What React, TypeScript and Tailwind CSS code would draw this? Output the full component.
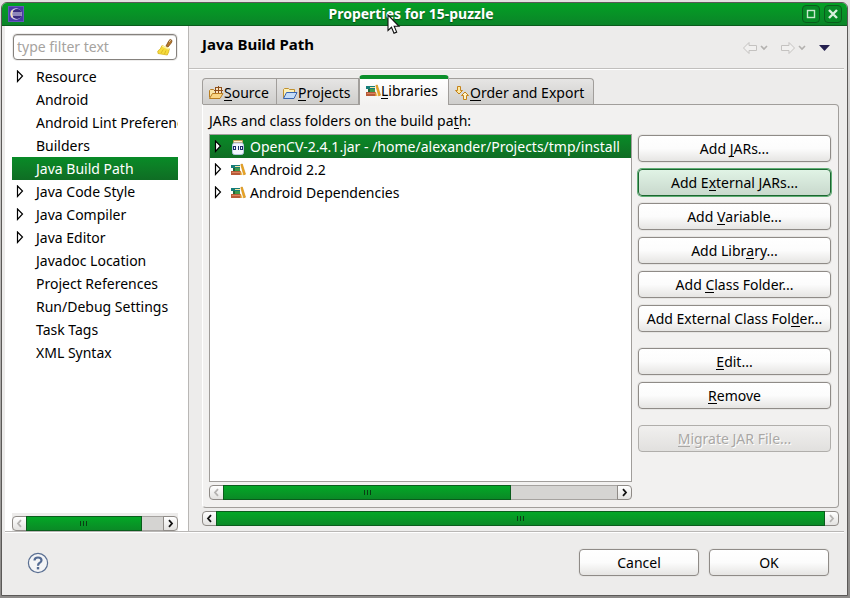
import type { ReactNode } from "react";

const FACE = "border border-[#8f8b87] rounded-[4px] bg-linear-to-b from-white via-[#fcfcfc] to-[#e6e5e3] shadow-[0_0_0_1px_#e6e5e3]";

function Key({ children }: { children: ReactNode }) {
  return <span className="border-b border-current leading-[15px] inline-block h-4">{children}</span>;
}

function Expander({ shown = true }: { shown?: boolean }) {
  return (
    <svg width="8" height="14" viewBox="0 0 8 14" className="shrink-0" aria-hidden="true">
      {shown && <path d="M1.5 1V11.5L6.5 6Z" fill="#fff" stroke="#000" strokeWidth="1.2" />}
    </svg>
  );
}

function EclipseIcon() {
  return (
    <svg width="16" height="16" viewBox="0 0 16 16" className="shrink-0" aria-hidden="true">
      <rect width="16" height="16" fill="#4a3aa6" />
      <rect x=".5" y=".5" width="15" height="15" fill="none" stroke="#6357bb" />
      <circle cx="8" cy="8" r="5.8" fill="#d8d3ea" />
      <circle cx="9" cy="8" r="5" fill="#392a7e" />
      <path d="M4.4 4.5Q2.6 8 4.4 11.5" fill="none" stroke="#f6ddb4" strokeWidth="1.4" />
      <path d="M4 7H14M4 9H14" stroke="#e6e4f7" strokeWidth="1" />
    </svg>
  );
}

function BroomIcon() {
  return (
    <svg width="16" height="18" viewBox="0 0 16 18" aria-hidden="true">
      <path d="M9 8L12 2.5Q13 .8 14.6 2Q15.4 3 14.4 4.8L11 9Z" fill="#b5772a" stroke="#7c4a14" strokeWidth=".8" />
      <path d="M12.3 3.5L13.5 2.5" stroke="#fff" />
      <path d="M5 7.5L12.3 10.8Q12 14 10.3 17L1 15.5L.8 13Q3.8 11.5 5 7.5Z" fill="#f6dc3c" stroke="#d9b41f" strokeWidth=".8" />
      <path d="M4 15L6.3 11.5M7.5 16L9 12.5" stroke="#cfa91a" strokeWidth=".7" />
      <path d="M5.3 8L12 11" stroke="#fdf3a0" strokeWidth="1.4" />
    </svg>
  );
}

function BooksIcon() {
  return (
    <svg width="16" height="14" viewBox="0 0 16 14" className="shrink-0" aria-hidden="true">
      <path d="M1 2H10V5H1Z" fill="#167d79" />
      <path d="M5 3H10V4H5Z" fill="#f6e4a0" />
      <path d="M3 5H10V8H3Z" fill="#3f9a4c" />
      <path d="M3 5H5V8H3Z" fill="#20663a" />
      <path d="M1 8H11V12H1Z" fill="#b85a38" />
      <path d="M2 9.5H10" stroke="#d98560" />
      <path d="M10.8 1.5L12.3 1L15.5 11.2L13.6 11.8Z" fill="#efab22" stroke="#c97f0a" strokeWidth=".6" />
      <path d="M10.5 7L12.6 12H10.5Z" fill="#f3bd45" />
    </svg>
  );
}

function JarIcon() {
  return (
    <svg width="16" height="16" viewBox="0 0 16 16" className="shrink-0" aria-hidden="true">
      <path d="M3.5 1.5H12.5V3.5H3.5Z" fill="#fff4cf" stroke="#c29b52" />
      <path d="M3.5 4H12.5L13.5 6V13.5Q13.5 15.5 11.5 15.5H4.5Q2.5 15.5 2.5 13.5V6Z" fill="#f2f6fd" stroke="#b5c4e2" />
      <g fill="none" stroke="#1d2d6b" strokeWidth="1">
        <rect x="3.5" y="7.5" width="2" height="3" />
        <path d="M8.5 7V11" />
        <rect x="10.5" y="7.5" width="2" height="3" />
      </g>
    </svg>
  );
}

function SourceIcon() {
  return (
    <svg width="16" height="14" viewBox="0 0 16 14" className="shrink-0" aria-hidden="true">
      <path d="M1.5 11.5V4.5L2.5 3.5H5.5L6.5 4.5H8" fill="#fbe6a8" stroke="#b97d20" />
      <rect x="7.5" y="1.5" width="6" height="6" fill="#fbe3c0" stroke="#8d4f1c" />
      <path d="M10.5 0V7M6 4.5H15" stroke="#8d4f1c" />
      <path d="M1.5 12.5L4.5 7.5H15L12 12.5Z" fill="#fbd684" stroke="#b97d20" />
    </svg>
  );
}

function FolderIcon() {
  return (
    <svg width="16" height="14" viewBox="0 0 16 14" className="shrink-0" aria-hidden="true">
      <path d="M1.5 12V3.5L2.5 2.5H6.5L7.5 3.5H12.5V7" fill="#fdf0b8" stroke="#c0912e" />
      <path d="M1.5 12.5L4.5 6.5H15L12 12.5Z" fill="#c4dcf8" stroke="#3865b0" />
    </svg>
  );
}

function OrderIcon() {
  return (
    <svg width="16" height="16" viewBox="0 0 16 16" className="shrink-0" aria-hidden="true">
      <path d="M3.5 1.5H6.5V5.5H8.5L5 9L1.5 5.5H3.5Z" fill="#ffe9a0" stroke="#c4821a" />
      <path d="M9.5 14.5H12.5V10.5H14.5L11 7L7.5 10.5H9.5Z" fill="#fff3c8" stroke="#c4821a" />
    </svg>
  );
}

function ScrollArrow({ dir, off, label }: { dir: "left" | "right"; off?: boolean; label: string }) {
  return (
    <button
      type="button"
      aria-label={label}
      disabled={off}
      className={`flex w-[15px] shrink-0 items-center justify-center border border-[#8f8b87] bg-linear-to-b from-white to-[#e3e2e0] ${dir === "left" ? "rounded-l-[4px]" : "rounded-r-[4px]"}`}
    >
      <svg width="7" height="9" viewBox="0 0 7 9" aria-hidden="true">
        <path d={dir === "left" ? "M5 1.2L2 4.5L5 7.8" : "M2 1.2L5 4.5L2 7.8"} fill="none" stroke={off ? "#b5b3b1" : "#111"} strokeWidth="1.8" />
      </svg>
    </button>
  );
}

function ScrollBar({ name, share, leftOff, rightOff }: { name: string; share: number; leftOff?: boolean; rightOff?: boolean }) {
  return (
    <div className="flex h-[15px] w-full shrink-0">
      <ScrollArrow dir="left" off={leftOff} label={`${name} left`} />
      <div className="-mx-px flex flex-1 border-y border-[#a5a29f] bg-[#d5d4d2]">
        <div
          className="z-10 -my-px flex items-center justify-center gap-[2px] border border-[#0a5c1c] bg-linear-to-b from-[#03a726] to-[#0a8a26]"
          style={{ width: `${share}%` }}
        >
          <i className="h-[5px] w-px bg-[#0a3d14]" />
          <i className="h-[5px] w-px bg-[#0a3d14]" />
          <i className="h-[5px] w-px bg-[#0a3d14]" />
        </div>
      </div>
      <ScrollArrow dir="right" off={rightOff} label={`${name} right`} />
    </div>
  );
}

const PAGES = [
  { name: "Resource", open: true },
  { name: "Android" },
  { name: "Android Lint Preferences" },
  { name: "Builders" },
  { name: "Java Build Path", selected: true },
  { name: "Java Code Style", open: true },
  { name: "Java Compiler", open: true },
  { name: "Java Editor", open: true },
  { name: "Javadoc Location" },
  { name: "Project References" },
  { name: "Run/Debug Settings" },
  { name: "Task Tags" },
  { name: "XML Syntax" },
];

const SELECTED = "bg-linear-to-b from-[#088b27] to-[#0f6d24] text-white";

function Sidebar() {
  return (
    <nav aria-label="Property pages" className="flex w-[184px] shrink-0 flex-col border-r border-[#b9b7b5] bg-white pl-[7px] pr-[10px] pt-2">
      <div className="mx-px flex h-[26px] items-center rounded-[4px] border border-[#85817d] bg-white shadow-[0_0_0_1px_#eeedec,inset_0_1px_0_#d8d7d6]">
        <input
          aria-label="Filter pages"
          placeholder="type filter text"
          className="w-0 flex-1 bg-transparent pl-[3px] outline-none placeholder:text-[#a6a3a0]"
        />
        <button type="button" aria-label="Clear filter" className="pr-[3px]">
          <BroomIcon />
        </button>
      </div>
      <ul className="mt-[5px] flex-1">
        {PAGES.map((p) => (
          <li key={p.name}>
            <button
              type="button"
              className={`flex h-[23px] w-full items-center gap-3 overflow-hidden whitespace-nowrap pl-1 text-left ${p.selected ? SELECTED : ""}`}
            >
              <Expander shown={!!p.open} />
              {p.name}
            </button>
          </li>
        ))}
      </ul>
      <div className="bg-[#edeceb] pt-[3px]">
        <ScrollBar name="Scroll pages" share={84} leftOff />
      </div>
    </nav>
  );
}

function NavArrow({ flip, label }: { flip?: boolean; label: string }) {
  return (
    <button type="button" disabled aria-label={label} className="flex items-center gap-[2px]">
      <svg width="16" height="14" viewBox="0 0 16 14" className={flip ? "-scale-x-100" : ""} aria-hidden="true">
        <path d="M1.5 7L7 1.5V4.5H14.5V9.5H7V12.5Z" fill="#f1f0ef" stroke="#c4c2c0" />
      </svg>
      <svg width="8" height="6" viewBox="0 0 8 6" aria-hidden="true">
        <path d="M1 1L4 4L7 1" fill="none" stroke="#b3b1af" strokeWidth="1.6" />
      </svg>
    </button>
  );
}

function Tab({ icon, active, width, children }: { icon: ReactNode; active?: boolean; width: string; children: ReactNode }) {
  return (
    <button
      type="button"
      role="tab"
      aria-selected={!!active}
      className={`flex items-center whitespace-nowrap border-[#a19e9b] pl-[5px] ${width} ${
        active
          ? "z-10 -mb-px h-[30px] rounded-t-[4px] border-x border-t-4 border-t-[#0b8f2b] bg-linear-to-b from-white to-[#f2f1f0] pb-[2px]"
          : "h-[26px] border-r border-t bg-linear-to-b from-[#e6e5e4] to-[#cfcecc] pt-[2px] first:rounded-tl-[4px] first:border-l last:rounded-tr-[4px]"
      }`}
    >
      {icon}
      <span>{children}</span>
    </button>
  );
}

const ENTRIES = [
  { name: "OpenCV-2.4.1.jar - /home/alexander/Projects/tmp/install", icon: <JarIcon />, selected: true },
  { name: "Android 2.2", icon: <BooksIcon /> },
  { name: "Android Dependencies", icon: <BooksIcon /> },
];

type Action = { before: string; letter: string; after: string; kind?: "focus" | "off"; gap?: boolean };

const ACTIONS: Action[] = [
  { before: "Add ", letter: "J", after: "ARs..." },
  { before: "Add E", letter: "x", after: "ternal JARs...", kind: "focus" },
  { before: "Add ", letter: "V", after: "ariable..." },
  { before: "Add Libr", letter: "a", after: "ry..." },
  { before: "Add ", letter: "C", after: "lass Folder..." },
  { before: "Add External Class Fol", letter: "d", after: "er..." },
  { before: "", letter: "E", after: "dit...", gap: true },
  { before: "", letter: "R", after: "emove" },
  { before: "", letter: "M", after: "igrate JAR File...", kind: "off", gap: true },
];

function actionLook(kind?: "focus" | "off") {
  if (kind === "focus")
    return "rounded-[4px] border border-[#1c6630] bg-linear-to-b from-[#e0f3e5] to-[#c9d9cd] shadow-[0_0_0_1px_#5fae74]";
  if (kind === "off")
    return "rounded-[4px] border border-[#b0aeab] bg-linear-to-b from-[#f1f0ef] to-[#e1e0de] text-[#a9a7a5] text-shadow-[1px_1px_0_#fff]";
  return FACE;
}

function BuildPath() {
  return (
    <main className="flex min-w-0 flex-1 flex-col">
      <header className="flex h-[43px] shrink-0 items-center border-b border-[#c1bfbd] pl-[13px] pr-[14px] shadow-[0_1px_0_#fff]">
        <h1 className="flex-1 pb-[6px] text-[15px] font-bold">Java Build Path</h1>
        <div className="flex items-center gap-3 pt-[2px]">
          <NavArrow label="Back" />
          <NavArrow flip label="Forward" />
          <button type="button" aria-label="Menu" className="pl-px">
            <svg width="11" height="6" viewBox="0 0 11 6" aria-hidden="true">
              <path d="M0 0H11L5.5 6Z" fill="#25204f" />
            </svg>
          </button>
        </div>
      </header>
      <div className="flex flex-1 flex-col pb-[5px] pl-[13px] pr-[5px] pt-[6px]">
        <div role="tablist" className="flex items-end">
          <Tab icon={<SourceIcon />} width="w-[75px]"><Key>S</Key>ource</Tab>
          <Tab icon={<FolderIcon />} width="w-[82px]"><Key>P</Key>rojects</Tab>
          <Tab icon={<BooksIcon />} width="w-[90px]" active><Key>L</Key>ibraries</Tab>
          <Tab icon={<OrderIcon />} width="w-[145px]"><Key>O</Key>rder and Export</Tab>
        </div>
        <section className="flex flex-1 flex-col rounded-b-[4px] rounded-tr-[4px] border border-[#a19e9b] border-l-white bg-[#f2f1f0] px-[6px] pb-[7px] pt-[5px]">
          <p className="h-6 leading-[22px]">JARs and class folders on the build pa<Key>t</Key>h:</p>
          <div className="flex flex-1 gap-[6px]">
            <div className="flex min-w-0 flex-1 flex-col gap-[3px]">
              <ul className="flex-1 border border-[#a19e9b] bg-white">
                {ENTRIES.map((e) => (
                  <li key={e.name}>
                    <button
                      type="button"
                      className={`flex h-[23px] w-full items-center overflow-hidden whitespace-nowrap pl-1 text-left ${e.selected ? SELECTED : ""}`}
                    >
                      <Expander />
                      <span className="ml-2 mr-1">{e.icon}</span>
                      {e.name}
                    </button>
                  </li>
                ))}
              </ul>
              <ScrollBar name="Scroll libraries" share={73} leftOff />
            </div>
            <div className="flex w-[194px] shrink-0 flex-col gap-[7px] pr-px pt-px">
              {ACTIONS.map((a) => (
                <button
                  key={a.before + a.letter + a.after}
                  type="button"
                  disabled={a.kind === "off"}
                  className={`h-[27px] shrink-0 whitespace-nowrap ${actionLook(a.kind)} ${a.gap ? "mt-[9px]" : ""}`}
                >
                  {a.before}
                  <Key>{a.letter}</Key>
                  {a.after}
                </button>
              ))}
            </div>
          </div>
        </section>
        <div className="mt-[3px] flex">
          <ScrollBar name="Scroll page" share={100} rightOff />
        </div>
      </div>
    </main>
  );
}

export default function App() {
  return (
    <div className="flex min-h-screen flex-col bg-linear-to-b from-[#e2e1e0] to-[#8d8b89] pb-[2px] pl-px pr-[2px] pt-[2px] font-['Noto_Sans','Open_Sans',sans-serif] text-[14px] leading-5 text-black">
      <div className="relative flex flex-1 flex-col overflow-hidden rounded-t-[6px] border border-[#5b5957] bg-[#edeceb]">
        <div className="flex h-[23px] shrink-0 items-center border-b border-[#0a5c1c] bg-linear-to-b from-[#03a024] to-[#0a8428] pl-[6px] pr-[5px]">
          <EclipseIcon />
          <h2 className="flex-1 pr-1 text-center font-bold text-white text-shadow-[0_1px_1px_#064d14]">Properties for 15-puzzle</h2>
          <div className="flex gap-1">
            <button type="button" aria-label="Maximize" className="flex size-[18px] items-center justify-center rounded-[4px] border border-[#0a5c1c] bg-[#078b26]">
              <svg width="10" height="10" viewBox="0 0 10 10" aria-hidden="true">
                <rect x="1.5" y="1.5" width="7" height="7" fill="none" stroke="#c9e8ce" strokeWidth="1.4" />
              </svg>
            </button>
            <button type="button" aria-label="Close" className="flex size-[18px] items-center justify-center rounded-[4px] border border-[#0a5c1c] bg-[#078b26]">
              <svg width="10" height="10" viewBox="0 0 10 10" aria-hidden="true">
                <path d="M1 1L9 9M9 1L1 9" stroke="#d8f0dc" strokeWidth="2.4" />
              </svg>
            </button>
          </div>
        </div>
        <svg width="14" height="21" viewBox="0 0 14 21" className="absolute left-[calc(50%-38px)] top-[11px]" aria-hidden="true">
          <path d="M1 1V16.5L4.5 13.3L7 19.3L9.7 18.1L7.2 12.3H12Z" fill="#fff" stroke="#111" strokeWidth="1.1" />
        </svg>
        <div className="flex flex-1 flex-col px-[3px]">
          <div className="flex flex-1 border-b border-[#b9b7b5]">
            <Sidebar />
            <BuildPath />
          </div>
          <footer className="flex h-[63px] shrink-0 items-center border-t border-white pb-[3px] pl-[22px] pr-[15px]">
            <button type="button" aria-label="Help">
              <svg width="22" height="22" viewBox="0 0 22 22" aria-hidden="true">
                <circle cx="11" cy="11" r="9.6" fill="#f3f4f6" stroke="#5a6f92" strokeWidth="1.2" />
                <path d="M7.5 8.5Q7.6 5.5 11 5.5Q14.5 5.5 14.5 8.3Q14.5 10 12.5 11Q11 11.9 11 13.8" fill="none" stroke="#546b93" strokeWidth="2.2" />
                <rect x="9.8" y="15" width="2.4" height="2.4" fill="#546b93" />
              </svg>
            </button>
            <div className="ml-auto flex gap-[10px]">
              <button type="button" className={`h-[27px] w-[120px] ${FACE}`}>Cancel</button>
              <button type="button" className={`h-[27px] w-[120px] ${FACE}`}>OK</button>
            </div>
          </footer>
        </div>
      </div>
    </div>
  );
}
